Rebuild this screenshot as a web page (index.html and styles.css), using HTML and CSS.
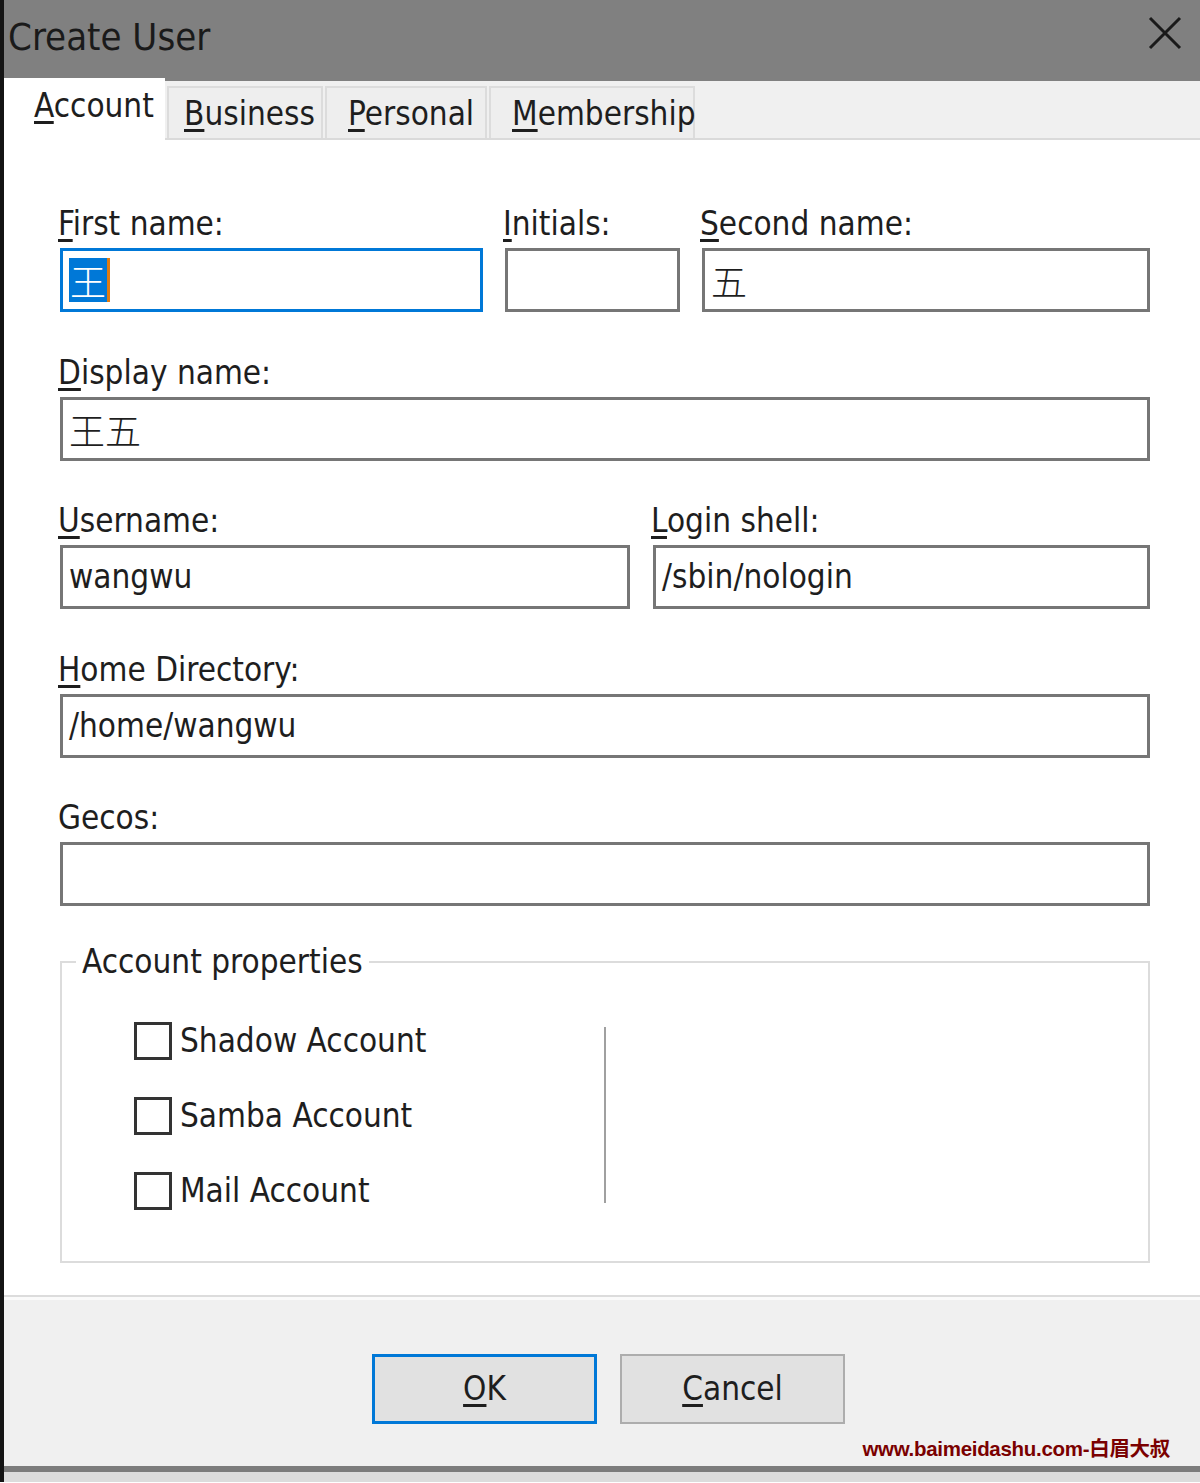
FILE: index.html
```html
<!DOCTYPE html>
<html lang="en">
<head>
    <meta charset="UTF-8">
    <title>Create User</title>
    <link rel="stylesheet" href="styles.css">
</head>
<body>
    <div class="window">
        <div class="titlebar">
            <span class="title">Create User</span>
            <svg class="close" width="34" height="34" viewBox="0 0 34 34">
                <path d="M2 2 L32 32 M32 2 L2 32" stroke="#1a1a1a" stroke-width="3" fill="none"/>
            </svg>
        </div>
        <div class="tabs">
            <div class="tab active"><u>A</u>ccount</div>
            <div class="tab business"><u>B</u>usiness</div>
            <div class="tab personal"><u>P</u>ersonal</div>
            <div class="tab membership"><u>M</u>embership</div>
        </div>
        <div class="content">
            <div class="row names">
                <div class="field">
                    <label><u>F</u>irst name:</label>
                    <div class="input focus"><span class="sel cjk">王</span><span class="caret"></span></div>
                </div>
                <div class="field">
                    <label><u>I</u>nitials:</label>
                    <div class="input"></div>
                </div>
                <div class="field">
                    <label><u>S</u>econd name:</label>
                    <div class="input"><span class="cjk">五</span></div>
                </div>
            </div>
            <div class="row">
                <div class="field">
                    <label><u>D</u>isplay name:</label>
                    <div class="input"><span class="cjk">王五</span></div>
                </div>
            </div>
            <div class="row login">
                <div class="field">
                    <label><u>U</u>sername:</label>
                    <div class="input">wangwu</div>
                </div>
                <div class="field">
                    <label><u>L</u>ogin shell:</label>
                    <div class="input">/sbin/nologin</div>
                </div>
            </div>
            <div class="row">
                <div class="field">
                    <label><u>H</u>ome Directory:</label>
                    <div class="input">/home/wangwu</div>
                </div>
            </div>
            <div class="row">
                <div class="field">
                    <label>Gecos:</label>
                    <div class="input"></div>
                </div>
            </div>
            <fieldset class="group">
                <legend>Account properties</legend>
                <div class="group-body">
                    <div class="checks">
                        <div class="check"><span class="box"></span>Shadow Account</div>
                        <div class="check"><span class="box"></span>Samba Account</div>
                        <div class="check"><span class="box"></span>Mail Account</div>
                    </div>
                    <div class="vsep"></div>
                </div>
            </fieldset>
        </div>
        <div class="footer">
            <div class="buttons">
                <div class="button default"><u>O</u>K</div>
                <div class="button"><u>C</u>ancel</div>
            </div>
            <div class="watermark">www.baimeidashu.com-白眉大叔</div>
        </div>
        <div class="bottom-edge"></div>
    </div>
</body>
</html>
```

FILE: styles.css
```css
body { margin: 0; background: #fff; font-family: "DejaVu Sans Condensed", "DejaVu Sans", "Noto Sans CJK SC", sans-serif; color: #1e1e1e; }
u { text-decoration-thickness: 3px; text-underline-offset: 4px; }

.window { width: 1196px; border-left: 4px solid #141414; }

.titlebar { height: 81px; background: #808080; display: flex; align-items: center; justify-content: space-between; padding: 0 18px 0 4px; }
.title { font-size: 38px; color: #1a1a1a; margin-top: -8px; }
.close { margin-top: -16px; }

.tabs { height: 57px; background: #f0f0f0; border-bottom: 2px solid #dadada; display: flex; align-items: flex-end; }
.tab { font-size: 33px; height: 52px; line-height: 52px; padding-left: 15px; background: #eeeeee; border: 2px solid #dcdcdc; border-bottom: none; margin-left: 2px; box-sizing: border-box; }
.tab.business { width: 156px; }
.tab.personal { width: 162px; padding-left: 21px; }
.tab.membership { width: 206px; padding-left: 21px; }
.tab.active { background: #fff; width: 161px; height: 62px; line-height: 56px; margin: 0; padding-left: 30px; border: none; position: relative; top: 2px; }

.content { background: #fff; padding: 64px 50px 32px 56px; }
.row { display: grid; grid-template-columns: 1fr; margin-bottom: 40.5px; }
.row.names { grid-template-columns: 423px 175px 1fr; gap: 22px; }
.row.login { grid-template-columns: 570px 1fr; gap: 23px; }
.field label { display: block; font-size: 33px; line-height: 40px; height: 44px; margin-left: -2px; }
.input { height: 58px; border: 3px solid #767676; font-size: 33px; line-height: 58px; padding-left: 6px; display: flex; align-items: center; }
.input.focus { border-color: #0078d7; }
.cjk { font-family: "Noto Sans CJK SC", sans-serif; font-size: 36px; font-weight: 300; }
.sel { background: #0078d7; color: #fff; height: 44px; line-height: 44px; padding: 0 1px; }
.caret { width: 3px; height: 44px; background: #e07a10; }

.group { margin: 35px 0 0 0; padding: 0; border: 2px solid #dcdcdc; height: 316px; box-sizing: border-box; }
.group legend { font-size: 33px; line-height: 30px; margin-left: 14px; padding: 0 6px; }
.group-body { display: flex; padding: 45px 0 0 72px; }
.checks { width: 470px; }
.check { display: flex; align-items: center; font-size: 33px; height: 38px; margin-bottom: 37px; }
.box { width: 32px; height: 32px; border: 3px solid #333; margin-right: 8px; }
.vsep { width: 2px; height: 176px; background: #a0a0a0; margin-top: 5px; }

.footer { background: #f0f0f0; border-top: 2px solid #dcdcdc; box-shadow: inset 0 3px 0 #fafafa; height: 171px; box-sizing: border-box; padding-top: 57px; }
.buttons { display: flex; justify-content: center; gap: 23px; padding-left: 13px; }
.button { width: 225px; height: 70px; box-sizing: border-box; background: #e1e1e1; border: 2px solid #adadad; font-size: 33px; display: flex; align-items: center; justify-content: center; }
.button.default { border: 3px solid #0078d7; }
.watermark { text-align: right; padding-right: 30px; margin-top: 8px; font-family: "Liberation Sans", "Noto Sans CJK SC", sans-serif; font-weight: bold; font-size: 20.5px; letter-spacing: -0.3px; color: #7a0000; }

.bottom-edge { height: 16px; border-top: 6px solid #7c7c7c; background: #dcdcdc; box-sizing: border-box; }
```
